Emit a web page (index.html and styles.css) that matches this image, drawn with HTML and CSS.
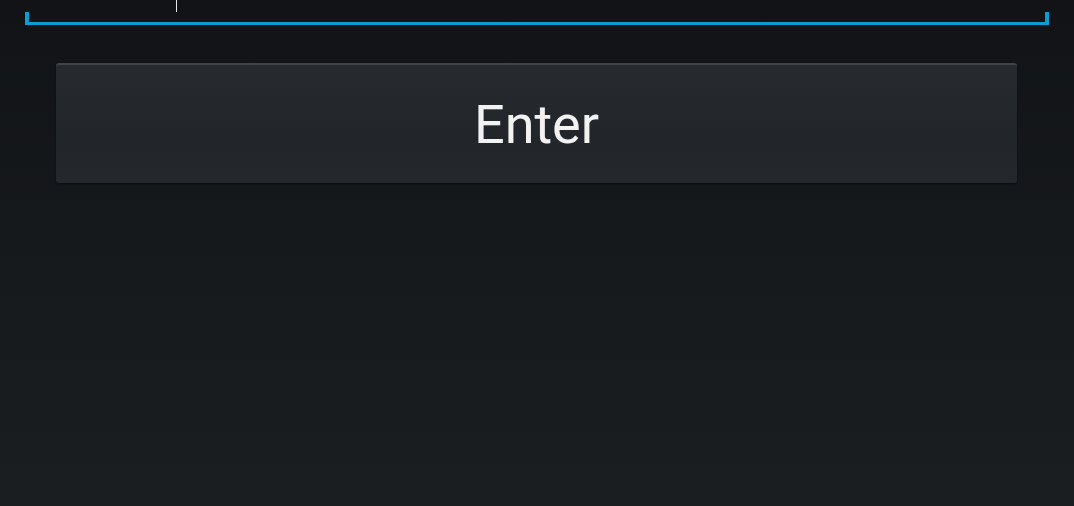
FILE: index.html
```html
<!DOCTYPE html>
<html lang="en">
<head>
    <meta charset="UTF-8">
    <meta name="viewport" content="width=device-width, initial-scale=1.0">
    <title>Enter</title>
    <link rel="stylesheet" href="styles.css">
</head>
<body>
    <div class="screen">
        <div class="text-field">
            <div class="text-row">
                <span class="caret"></span>
            </div>
            <div class="underline"></div>
        </div>
        <div class="actions">
            <button class="btn">Enter</button>
        </div>
    </div>
</body>
</html>
```

FILE: styles.css
```css
html, body {
    margin: 0;
    padding: 0;
    height: 100%;
}

body {
    font-family: Roboto, "Noto Sans", sans-serif;
    background: linear-gradient(to bottom, #111316 0%, #16191c 45%, #1b1e21 100%);
    overflow: hidden;
}

.screen {
    display: flex;
    flex-direction: column;
}

.text-field {
    margin: 0 25px 0 25px;
    width: 1024px;
}

.text-row {
    height: 12px;
    padding-left: 151px;
}

.caret {
    display: block;
    width: 1px;
    height: 12px;
    background-color: #e8e8e8;
}

.underline {
    height: 10px;
    border: 3px solid #0a9fd0;
    border-left-width: 4px;
    border-right-width: 4px;
    border-top: none;
}

.actions {
    padding: 38px 57px 0 56px;
}

.btn {
    display: block;
    width: 961px;
    height: 120px;
    border: none;
    border-top: 2px solid #40444a;
    border-radius: 3px;
    background: linear-gradient(to bottom, #272b30 0%, #22262b 60%, #24282c 100%);
    box-shadow: 0 1px 2px rgba(0, 0, 0, 0.5);
    color: #f2f2f2;
    font-family: Roboto, "Noto Sans", sans-serif;
    font-size: 54px;
    padding: 0;
    cursor: pointer;
}
```
